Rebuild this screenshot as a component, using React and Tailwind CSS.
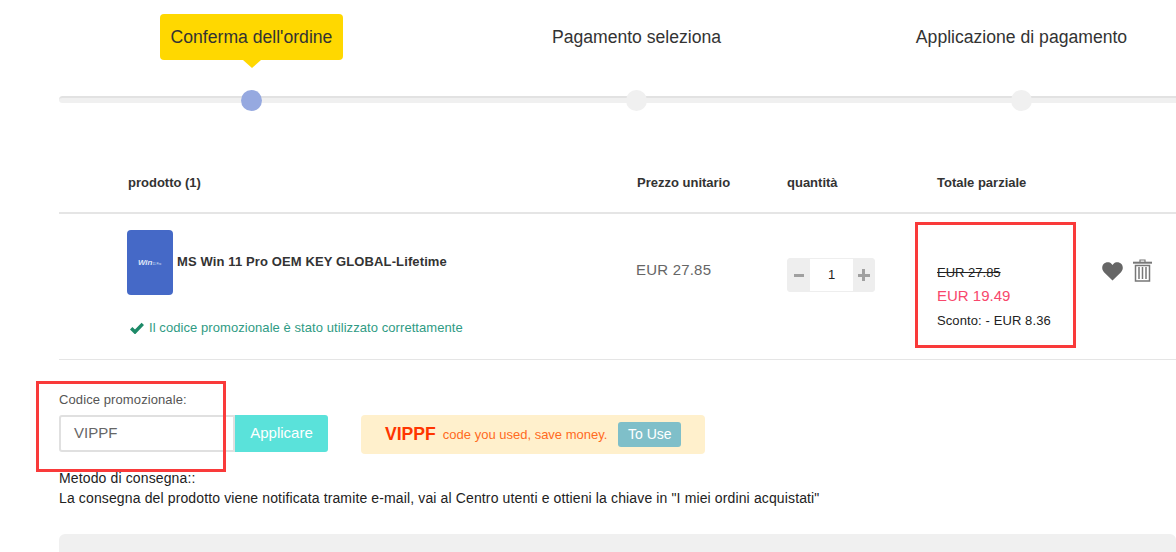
function Heart() {
  return (
    <svg width="21" height="19" viewBox="0 0 21 19" className="text-[#666]">
      <path
        fill="currentColor"
        d="M10.5 18.5 2 10.2C-.3 7.8-.3 4.2 1.6 2.1 3.700-.1 7.400-.2 9.400 1.800l1.100 1.200 1.100-1.200c2-2 5.700-1.900 7.800.3 1.900 2.100 1.900 5.700-.4 8.100z"
      />
    </svg>
  );
}

function Trash() {
  return (
    <svg width="19" height="23" viewBox="0 0 19 23" fill="none" stroke="#777" className="mt-[-3px]">
      <path d="M7 3V1h5v2" strokeWidth="1.200" />
      <path d="M0 3.700h19" strokeWidth="2" />
      <path d="M2.500 6.500h14V22h-14z" strokeWidth="1.500" />
      <path d="M6 8v12M9.500 8v12M13 8v12" strokeWidth="1.500" />
    </svg>
  );
}

function Step({ label, active }) {
  return (
    <div className="flex h-[113px] w-[385px] shrink-0 flex-col items-center">
      {active ? (
        <div className="relative mt-[14px] flex h-[46px] w-[183px] items-center justify-center rounded-[4px] bg-[#ffd800] text-[17.6px] text-[#333]">
          {label}
          <span className="absolute left-[83px] top-[46px] h-0 w-0 border-x-[9px] border-t-[8px] border-x-transparent border-t-[#ffd800]" />
        </div>
      ) : (
        <div className="mt-[14px] flex h-[46px] items-center text-[17.6px] text-[#333]">{label}</div>
      )}
      <div
        className={
          active
            ? "mt-[30px] h-[21px] w-[21px] rounded-full bg-[#96a9e0]"
            : "mt-[30px] h-[21px] w-[21px] rounded-full bg-[#f0f0f0]"
        }
      />
    </div>
  );
}

function Stepper() {
  return (
    <div className="relative flex">
      <div className="absolute left-0 top-[96px] h-[7px] w-[1117px] rounded-l-full border-t-2 border-[#e2e2e2] bg-[#f0f0f0]" />
      <div className="relative flex">
        <Step label="Conferma dell'ordine" active />
        <Step label="Pagamento seleziona" />
        <Step label="Applicazione di pagamento" />
      </div>
    </div>
  );
}

function ProductRow() {
  return (
    <div className="flex h-[146px] border-b border-[#e5e5e5]">
      <div className="ml-[68px] w-[509px] pt-[16px]">
        <div className="flex">
          <div className="flex h-[65px] w-[46px] items-center justify-center rounded-[4px] bg-[#4569c7] pr-[1px]">
            <span className="text-[8px] font-bold italic leading-none text-[#dfe6f7]">
              Win<span className="text-[3px] font-normal not-italic">11 Pro</span>
            </span>
          </div>
          <div className="ml-[4px] mt-[24px] text-[13px] font-bold leading-[16px] tracking-[0.12px] text-[#333]">
            MS Win 11 Pro OEM KEY GLOBAL-Lifetime
          </div>
        </div>
        <div className="ml-[3px] mt-[25px] flex items-center gap-[5px] text-[13px] leading-[16px] tracking-[0.07px] text-[#2f9b84]">
          <svg width="14" height="12" viewBox="0 0 14 12">
            <path d="M1.200 6.200 5 10 12.800 1.800" fill="none" stroke="#1d8a68" strokeWidth="3.400" />
          </svg>
          Il codice promozionale è stato utilizzato correttamente
        </div>
      </div>
      <div className="w-[151px] pt-[46px] text-[15px] leading-[20px] tracking-[0.2px] text-[#666]">EUR 27.85</div>
      <div className="w-[150px] pt-[44px]">
        <div className="flex h-[34px] w-[88px] rounded-[3px] border border-[#eeeeee] bg-[#eeeeee]">
          <div className="flex w-[22px] items-center justify-center text-[#999]">
            <span className="h-[3px] w-[10px] bg-[#a0a0a0]" />
          </div>
          <div className="flex w-[43px] items-center justify-center bg-white text-[13px] text-[#222]">1</div>
          <div className="relative flex w-[21px] items-center justify-center">
            <span className="h-[3px] w-[12px] bg-[#a0a0a0]" />
            <span className="absolute h-[12px] w-[3px] bg-[#a0a0a0]" />
          </div>
        </div>
      </div>
      <div className="w-[165px] pt-[51px]">
        <div className="text-[13px] leading-[16px] text-[#222] line-through">EUR 27.85</div>
        <div className="mt-[6px] text-[15px] leading-[18px] text-[#f8476c]">EUR 19.49</div>
        <div className="mt-[8px] text-[13px] leading-[16px] tracking-[0.1px] text-[#222]">Sconto: - EUR 8.36</div>
      </div>
      <div className="flex items-start gap-[10px] pt-[48px]">
        <Heart />
        <Trash />
      </div>
    </div>
  );
}

function PromoSection() {
  return (
    <div className="relative pt-[32px]">
      <div className="text-[13px] leading-[16px] tracking-[0.1px] text-[#555]">Codice promozionale:</div>
      <div className="mt-[7px] flex items-start">
        <div className="flex h-[37px] w-[176px] items-center rounded-l-[3px] border-2 border-[#e0e0e0] pl-[13px] text-[15px] text-[#666]">
          VIPPF
        </div>
        <div className="flex h-[37px] w-[93px] items-center justify-center rounded-r-[3px] bg-[#5ae2da] text-[15px] font-medium text-white">
          Applicare
        </div>
        <div className="ml-[33px] flex h-[39px] w-[344px] items-center rounded-[4px] bg-[#fff0cc] pl-[24px]">
          <span className="text-[17.6px] font-bold text-[#ff3500]">VIPPF</span>
          <span className="ml-[7px] text-[13px] text-[#ff6a22]">code you used, save money.</span>
          <span className="ml-[11px] flex h-[25px] w-[63px] items-center justify-center rounded-[3px] bg-[#7fbfc9] text-[14px] text-white">
            To Use
          </span>
        </div>
      </div>
      <div className="mt-[14px] text-[14px] leading-[20px] tracking-[0.13px] text-[#222]">
        <div>Metodo di consegna::</div>
        <div>
          La consegna del prodotto viene notificata tramite e-mail, vai al Centro utenti e ottieni la chiave in "I miei
          ordini acquistati"
        </div>
      </div>
    </div>
  );
}

export default function App() {
  return (
    <div className="relative h-[552px] w-[1176px] overflow-hidden bg-white pl-[59px] font-['Liberation_Sans',Arial,sans-serif]">
      <Stepper />
      <div className="mt-[38px] flex h-[63px] border-b-2 border-[#e5e5e5] text-[13px] font-bold text-[#333]">
        <div className="ml-[69px] w-[509px] pt-[22px]">prodotto (1)</div>
        <div className="w-[150px] pt-[22px]">Prezzo unitario</div>
        <div className="w-[150px] pt-[22px]">quantità</div>
        <div className="pt-[22px]">Totale parziale</div>
      </div>
      <ProductRow />
      <PromoSection />
      <div className="mt-[26px] h-[30px] rounded-t-[6px] bg-[#f0f0f0]" />

      {/* red annotation boxes from the original screenshot */}
      <div className="absolute left-[915px] top-[222px] h-[126px] w-[161px] border-[3px] border-[#f93a3a]" />
      <div className="absolute left-[36px] top-[381px] h-[91px] w-[190px] border-[3px] border-[#f93a3a]" />
    </div>
  );
}
